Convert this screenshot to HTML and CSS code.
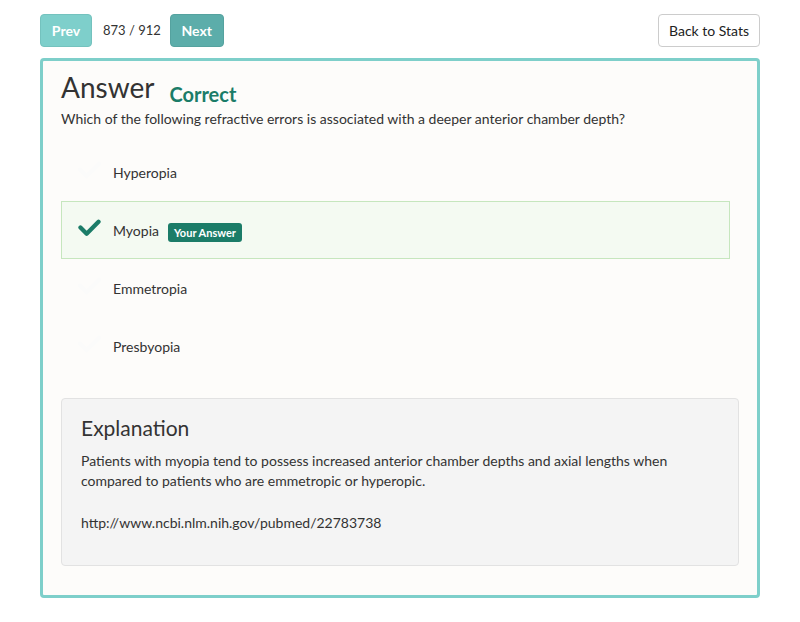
FILE: index.html
```html
<!DOCTYPE html>
<html>
<head>
<meta charset="utf-8">
<link rel="stylesheet" href="styles.css">
</head>
<body>
<div class="page">
  <div class="topbar">
    <div class="nav">
      <button class="btn btn-prev">Prev</button>
      <span class="counter">873 / 912</span>
      <button class="btn btn-next">Next</button>
    </div>
    <button class="btn btn-back">Back to Stats</button>
  </div>
  <div class="card">
    <div class="title-row">
      <h1 class="title">Answer</h1>
      <span class="status">Correct</span>
    </div>
    <p class="question">Which of the following refractive errors is associated with a deeper anterior chamber depth?</p>
    <ul class="options">
      <li class="option">
        <svg class="check faint" viewBox="0 0 24 20"><path d="M2 10 L9 17 L22 4" fill="none" stroke="currentColor" stroke-width="4.5" stroke-linecap="round" stroke-linejoin="round"/></svg>
        <span class="label">Hyperopia</span>
      </li>
      <li class="option selected">
        <svg class="check" viewBox="0 0 24 20"><path d="M2.5 10 L9 16.5 L21.5 4" fill="none" stroke="currentColor" stroke-width="4.5" stroke-linecap="round" stroke-linejoin="round"/></svg>
        <span class="label">Myopia</span>
        <span class="badge">Your Answer</span>
      </li>
      <li class="option">
        <svg class="check faint" viewBox="0 0 24 20"><path d="M2 10 L9 17 L22 4" fill="none" stroke="currentColor" stroke-width="4.5" stroke-linecap="round" stroke-linejoin="round"/></svg>
        <span class="label">Emmetropia</span>
      </li>
      <li class="option">
        <svg class="check faint" viewBox="0 0 24 20"><path d="M2 10 L9 17 L22 4" fill="none" stroke="currentColor" stroke-width="4.5" stroke-linecap="round" stroke-linejoin="round"/></svg>
        <span class="label">Presbyopia</span>
      </li>
    </ul>
    <div class="explanation">
      <h2 class="exp-title">Explanation</h2>
      <p class="exp-text">Patients with myopia tend to possess increased anterior chamber depths and axial lengths when compared to patients who are emmetropic or hyperopic.</p>
      <p class="exp-text">http://www.ncbi.nlm.nih.gov/pubmed/22783738</p>
    </div>
  </div>
</div>
</body>
</html>
```
FILE: styles.css
```css
* { box-sizing: border-box; }
body {
  margin: 0;
  background: #ffffff;
  font-family: Lato, "Open Sans", sans-serif;
  color: #333333;
}
.page {
  padding: 14px 40px 0 40px;
}
.topbar {
  display: flex;
  justify-content: space-between;
  align-items: center;
  height: 33px;
}
.nav {
  display: flex;
  align-items: center;
}
.btn {
  font-family: Lato, "Open Sans", sans-serif;
  font-size: 14px;
  height: 33px;
  border-radius: 4px;
  padding: 0 12px;
  cursor: pointer;
}
.btn-prev {
  width: 52px;
  background: #7ecfcb;
  border: 1px solid #74c2be;
  color: #ffffff;
  font-weight: 700;
  padding: 0;
}
.btn-next {
  width: 54px;
  background: #5cadaa;
  border: 1px solid #55a29f;
  color: #ffffff;
  font-weight: 700;
  padding: 0;
}
.counter {
  font-size: 13px;
  color: #333;
  margin: 0 9px 0 11px;
  position: relative;
  top: -1px;
}
.btn-back {
  width: 102px;
  background: #ffffff;
  border: 1px solid #cccccc;
  color: #222;
  padding: 0;
}
.card {
  margin-top: 11px;
  width: 720px;
  height: 540px;
  border: 3px solid #7ecfca;
  border-radius: 4px;
  background: #fdfcfa;
  padding: 9px 18px 0 18px;
}
.title-row {
  display: flex;
  align-items: baseline;
}
.title {
  margin: 0;
  font-size: 28px;
  font-weight: 400;
  color: #333;
  line-height: 34px;
}
.status {
  margin-left: 15px;
  font-size: 20px;
  font-weight: 700;
  color: #1b7c68;
  position: relative;
  top: 4px;
}
.question {
  margin: 6px 0 0 0;
  font-size: 14px;
  line-height: 18px;
  color: #333;
}
.options {
  list-style: none;
  margin: 15px 0 0 0;
  padding: 0;
  width: 669px;
}
.option {
  display: flex;
  align-items: center;
  height: 58px;
  padding-left: 16px;
  border: 1px solid transparent;
  font-size: 14px;
}
.option.selected {
  background: #f4faf2;
  border-color: #c6e6be;
}
.check {
  width: 23px;
  height: 19px;
  color: #1b7c68;
  margin-right: 12px;
  position: relative;
  top: -3px;
}
.check.faint {
  color: #fbfbfa;
}
.label {
  color: #333;
}
.badge {
  margin-left: 9px;
  background: #1b7c68;
  color: #fff;
  font-size: 11px;
  font-weight: 700;
  padding: 3px 6px;
  border-radius: 3px;
  line-height: 13px;
  position: relative;
  top: 2px;
}
.explanation {
  margin-top: 23px;
  background: #f4f4f4;
  border: 1px solid #e2e2e2;
  border-radius: 4px;
  height: 168px;
  padding: 16px 19px;
}
.exp-title {
  margin: 0;
  font-size: 21px;
  font-weight: 400;
  color: #333;
  line-height: 26px;
}
.exp-text {
  margin: 10px 0 0 0;
  font-size: 14px;
  line-height: 20px;
  color: #333;
}
.exp-text + .exp-text {
  margin-top: 22px;
}
```
